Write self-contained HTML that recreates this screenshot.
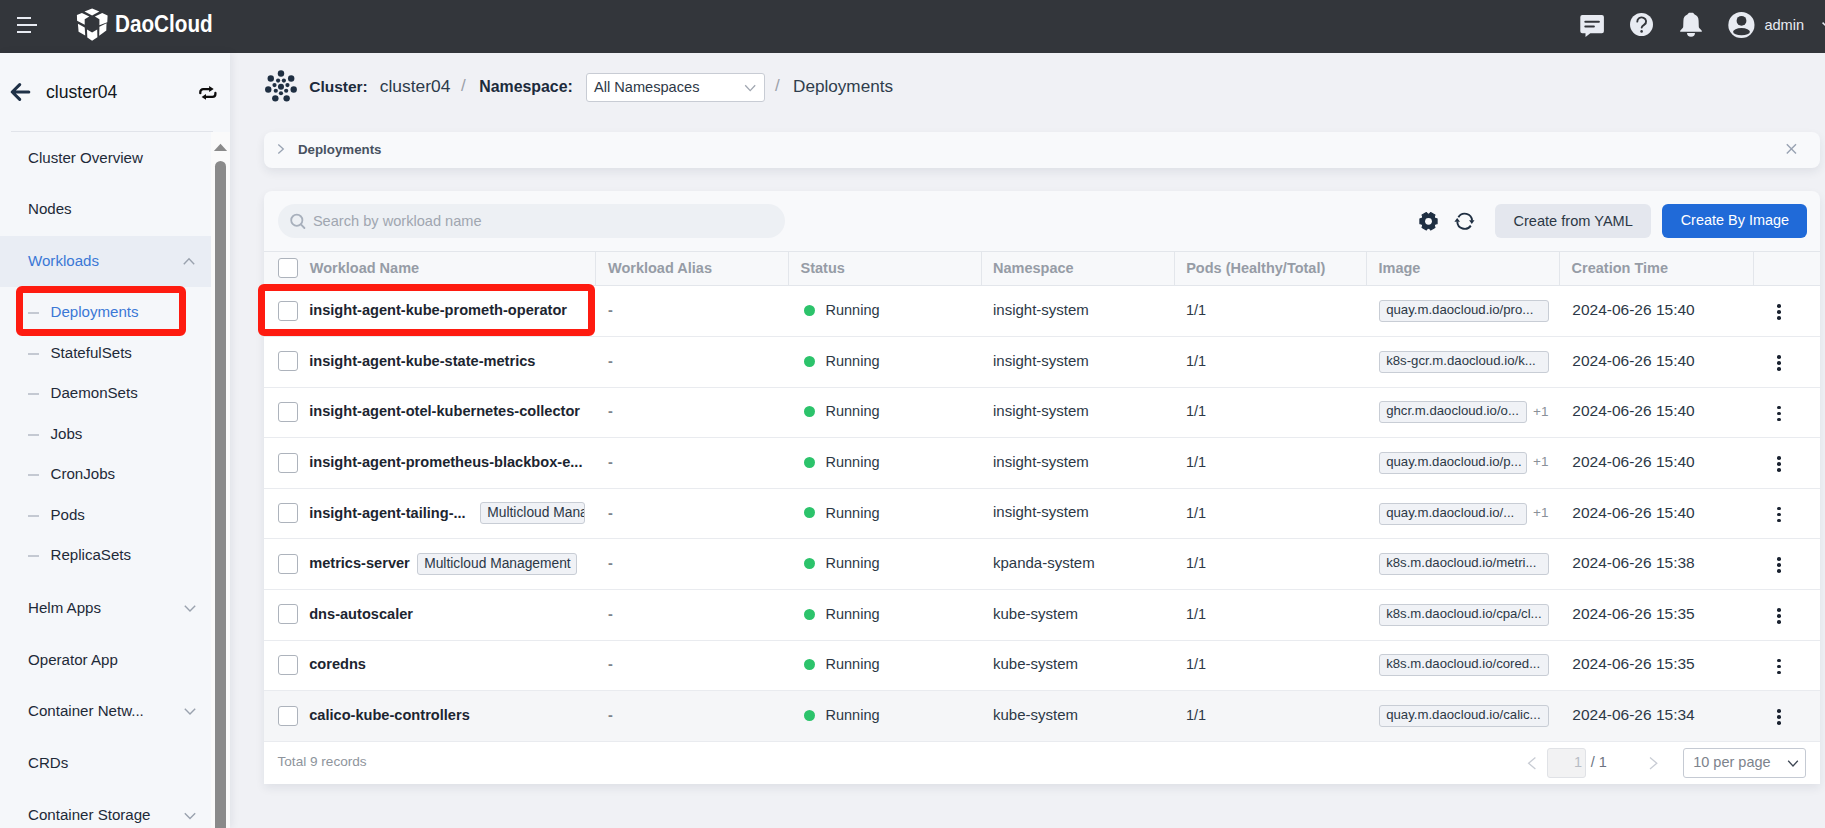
<!DOCTYPE html>
<html><head><meta charset="utf-8">
<style>
*{box-sizing:border-box;margin:0;padding:0}
html,body{width:1825px;height:828px;overflow:hidden}
body{background:#f0f1f5;font-family:"Liberation Sans",sans-serif;position:relative;color:#2c3846}
.a{position:absolute;white-space:nowrap}
.t{position:absolute;white-space:nowrap;line-height:20px;height:20px}
svg{display:block;position:absolute;overflow:visible}
#hdr{position:absolute;left:0;top:0;width:1825px;height:52.5px;background:#33363b}
#side{position:absolute;left:0;top:53px;width:230px;height:775px;background:#f5f7fa;box-shadow:2px 0 8px rgba(20,30,50,0.07)}
.nav{position:absolute;left:28px;font-size:15.1px;color:#1e2a38;line-height:20px;height:20px;white-space:nowrap}
.sub{position:absolute;left:50.5px;font-size:15.1px;color:#1e2a38;line-height:20px;height:20px;white-space:nowrap}
.dash{position:absolute;left:28px;width:11px;height:2px;background:#c4c9d2}
.card{position:absolute;background:#f8f9fb;box-shadow:0 4px 10px rgba(30,40,60,0.08)}
.hcell{position:absolute;top:-1px;height:34px;line-height:34px;font-size:14.5px;font-weight:700;color:#969ca6;white-space:nowrap}
.vsep{position:absolute;top:0;width:1px;height:34px;background:#e3e6eb}
.row{position:absolute;left:0;width:1556px;height:50.6px;background:#fff;border-bottom:1px solid #e9ebef}
.cb{position:absolute;width:20px;height:20px;border:1px solid #adb3bc;border-radius:3px;background:#fff}
.nm{position:absolute;left:45.2px;font-size:14.6px;font-weight:700;color:#1c2530;line-height:20px;white-space:nowrap}
.cell{position:absolute;font-size:14.5px;color:#2c3846;line-height:20px;white-space:nowrap}
.date{font-size:15.5px}
.dot{position:absolute;width:11px;height:11px;border-radius:50%;background:#2cc36b}
.tag{position:absolute;height:22px;border:1px solid #c8cdd5;background:#f0f2f6;border-radius:3px;font-size:13.2px;line-height:18.5px;padding-left:6px;color:#2c3846;white-space:nowrap;overflow:hidden}
.plus{position:absolute;font-size:13.5px;color:#8a9099;line-height:20px}
.more{position:absolute;width:4px;height:16px}
.more i{position:absolute;left:0;width:3.6px;height:3.6px;border-radius:50%;background:#1a2230}
</style></head><body>

<!-- HEADER -->
<div id="hdr">
  <div class="a" style="left:17px;top:16.5px;width:14px;height:2px;background:#e8ebf2"></div>
  <div class="a" style="left:17px;top:24px;width:20px;height:2px;background:#e8ebf2"></div>
  <div class="a" style="left:17px;top:31px;width:14px;height:2px;background:#e8ebf2"></div>
  <svg style="left:70px;top:4px" width="45" height="42" viewBox="70 4 45 42"><g fill="#fff">
    <path d="M84.5,11.6 L92.1,8.6 L99.4,11.6 L92.1,15.4 Z"/>
    <path d="M76.9,14.9 L81.9,12.9 L89.3,16.4 L84.7,19.2 L84.7,24.8 L77.1,20.8 Z"/>
    <path d="M94.9,16.4 L102.2,13.1 L107.6,15.4 L107.3,22.3 L99.4,25.3 L99.4,19.2 Z"/>
    <path d="M77.9,23.8 L84.7,27.4 L85.2,35.5 L78.6,31.7 Z"/>
    <path d="M87,29.4 L92.1,32.4 L97.2,29.4 L97.4,37.2 L92.1,40.8 L87.3,37.5 Z"/>
    <path d="M99.4,26.8 L106.5,23.3 L106.3,30.4 L99.2,35.7 Z"/>
  </g></svg>
  <div class="t" style="left:115px;top:12px;font-size:23.5px;line-height:24px;height:24px;font-weight:700;color:#fff;transform:scaleX(0.88);transform-origin:left center">DaoCloud</div>
  <svg style="left:0;top:0" width="1825" height="52" viewBox="0 0 1825 52">
    <path d="M1582.3,14.9 h19.6 a2,2 0 0 1 2,2 v14.4 a2,2 0 0 1 -2,2 h-11.6 l-4.8,3.8 v-3.8 h-3.2 a2,2 0 0 1 -2,-2 v-14.4 a2,2 0 0 1 2,-2 z" fill="#e8ebf2"/>
    <path d="M1585.3,21.8 h13.6 M1585.3,26.5 h8.6" stroke="#32353a" stroke-width="2" stroke-linecap="round"/>
    <circle cx="1641.5" cy="24.5" r="11.5" fill="#e8ebf2"/>
    <path d="M1637.3,21.6 a4.4,4 0 1 1 7,3 c-1.5,1 -2.6,1.8 -2.6,3" stroke="#32353a" stroke-width="1.9" fill="none" stroke-linecap="round"/>
    <circle cx="1641.6" cy="31.4" r="1.3" fill="#32353a"/>
    <path d="M1689.2,12.8 L1692.8,12.8 C1693.5,12.8 1694,14 1694.6,14.6 C1697.2,15.6 1698.6,17.8 1698.6,20.8 L1698.8,26.4 C1698.8,27.4 1699.3,28.1 1700,28.8 L1701.6,30.4 C1702.2,31 1701.9,31.8 1701,31.8 L1681,31.8 C1680.1,31.8 1679.8,31 1680.4,30.4 L1682,28.8 C1682.7,28.1 1683.2,27.4 1683.2,26.4 L1683.4,20.8 C1683.4,17.8 1684.8,15.6 1687.4,14.6 C1688,14 1688.5,12.8 1689.2,12.8 Z" fill="#e8ebf2"/>
    <path d="M1687,33.1 A4,3.7 0 0 0 1695,33.1 Z" fill="#e8ebf2"/>
    <circle cx="1741.4" cy="25" r="13.1" fill="#e8ebf2"/>
    <circle cx="1741.5" cy="20.8" r="4.9" fill="#32353a"/>
    <ellipse cx="1741.5" cy="31.7" rx="8.4" ry="3.6" fill="#32353a"/>
    <path d="M1822.6,22.6 l3.5,3.5" stroke="#e8ebf2" stroke-width="1.5" fill="none"/>
  </svg>
  <div class="t" style="left:1764.4px;top:14.8px;font-size:14.6px;color:#e8ebf2">admin</div>
</div>

<!-- SIDEBAR -->
<div id="side">
  <svg style="left:0;top:-53px" width="230" height="180" viewBox="0 0 230 180">
    <path d="M28.8,92 H12.5 M19.7,84.6 L12.2,92 L19.7,99.4" stroke="#1f3147" stroke-width="3.1" fill="none" stroke-linecap="round" stroke-linejoin="round"/>
    <path d="M200.3,93.2 v-1 a2.9,2.9 0 0 1 2.9,-3 h7" stroke="#0d0d0d" stroke-width="2.3" fill="none" stroke-linecap="round"/>
    <path d="M209.1,86.1 L213.7,89.1 L209.1,92 Z" fill="#0d0d0d"/>
    <path d="M215.4,93 v1 a2.9,2.9 0 0 1 -2.9,2.9 h-7" stroke="#0d0d0d" stroke-width="2.3" fill="none" stroke-linecap="round"/>
    <path d="M206,94 L201.6,96.9 L206,99.8 Z" fill="#0d0d0d"/>
  </svg>
  <div class="t" style="left:46px;top:29px;font-size:17.6px;color:#121820">cluster04</div>
  <div class="a" style="left:11px;top:78px;width:202px;height:1px;background:#e1e4ea"></div>
  <!-- scrollbar -->
  <div class="a" style="left:211px;top:79px;width:19px;height:696px;background:#fafafa"></div>
  <svg style="left:211px;top:79px" width="19" height="30" viewBox="211 132 19 30">
    <path d="M213.9,151.1 L220.5,143.7 L227.1,151.1 Z" fill="#8a8a8a"/>
  </svg>
  <div class="a" style="left:215px;top:108px;width:11px;height:700px;background:#8a8a8a;border-radius:5.5px"></div>

  <div class="nav" style="top:94.8px">Cluster Overview</div>
  <div class="nav" style="top:146px">Nodes</div>
  <div class="a" style="left:0;top:183px;width:211px;height:50.5px;background:#e9edf4"></div>
  <div class="nav" style="top:197.8px;color:#3b78d6">Workloads</div>
  <svg style="left:180px;top:200px" width="20" height="14" viewBox="180 253 20 14">
    <path d="M183.8,264.2 L189,258.8 L194.2,264.2" stroke="#9aa2ae" stroke-width="1.4" fill="none"/>
  </svg>
  <div class="dash" style="top:259px"></div><div class="sub" style="top:249.4px;color:#3b78d6">Deployments</div>
  <div class="dash" style="top:299.5px"></div><div class="sub" style="top:289.9px">StatefulSets</div>
  <div class="dash" style="top:340px"></div><div class="sub" style="top:330.4px">DaemonSets</div>
  <div class="dash" style="top:380.5px"></div><div class="sub" style="top:370.9px">Jobs</div>
  <div class="dash" style="top:421px"></div><div class="sub" style="top:411.4px">CronJobs</div>
  <div class="dash" style="top:461.5px"></div><div class="sub" style="top:451.9px">Pods</div>
  <div class="dash" style="top:502px"></div><div class="sub" style="top:492.4px">ReplicaSets</div>
  <div class="nav" style="top:545.4px">Helm Apps</div>
  <div class="nav" style="top:596.6px">Operator App</div>
  <div class="nav" style="top:648.3px">Container Netw...</div>
  <div class="nav" style="top:700.1px">CRDs</div>
  <div class="nav" style="top:751.8px">Container Storage</div>
  <svg style="left:180px;top:540px" width="20" height="240" viewBox="180 593 20 240">
    <path d="M184.8,605.8 L190,611 L195.2,605.8 M184.8,708.8 L190,714 L195.2,708.8 M184.8,813.3 L190,818.5 L195.2,813.3" stroke="#9aa2ae" stroke-width="1.4" fill="none"/>
  </svg>
  <!-- red box -->
  <div class="a" style="left:16px;top:233px;width:170px;height:50px;border:7px solid #fe1b10;border-radius:6px"></div>
</div>

<!-- BREADCRUMB -->
<svg style="left:260px;top:65px" width="42" height="42" viewBox="260 65 42 42" id="clicon"><g fill="#1f2f42"><circle cx="280.98" cy="73.55" r="3.2"/><circle cx="291.18" cy="78.46" r="3.2"/><circle cx="293.70" cy="89.50" r="3.2"/><circle cx="286.64" cy="98.36" r="3.2"/><circle cx="275.32" cy="98.36" r="3.2"/><circle cx="268.26" cy="89.50" r="3.2"/><circle cx="270.78" cy="78.46" r="3.2"/><circle cx="283.87" cy="80.61" r="2.1"/><circle cx="287.46" cy="85.12" r="2.1"/><circle cx="286.18" cy="90.75" r="2.1"/><circle cx="280.98" cy="93.25" r="2.1"/><circle cx="275.78" cy="90.75" r="2.1"/><circle cx="274.50" cy="85.12" r="2.1"/><circle cx="278.09" cy="80.61" r="2.1"/><circle cx="280.98" cy="86.69999999999999" r="3"/></g></svg>
<div class="t" style="left:309.2px;top:77px;font-size:15.5px;font-weight:700;color:#1c2b3c">Cluster:</div>
<div class="t" style="left:379.8px;top:76px;font-size:17.4px;color:#2c3a4a">cluster04</div>
<div class="t" style="left:461px;top:76px;font-size:17px;color:#9aa0a8">/</div>
<div class="t" style="left:479.2px;top:77px;font-size:15.9px;font-weight:700;color:#1c2b3c">Namespace:</div>
<div class="a" style="left:585.5px;top:73.2px;width:179px;height:28.4px;background:#fff;border:1px solid #c8ccd4;border-radius:3px"></div>
<div class="t" style="left:594px;top:77px;font-size:14.6px;color:#2d3846">All Namespaces</div>
<svg style="left:740px;top:80px" width="20" height="16" viewBox="740 80 20 16">
  <path d="M745.2,85.2 L750.2,90.6 L755.2,85.2" stroke="#a0a6b0" stroke-width="1.3" fill="none"/>
</svg>
<div class="t" style="left:775px;top:76px;font-size:17px;color:#9aa0a8">/</div>
<div class="t" style="left:793px;top:76px;font-size:17.15px;color:#2f3d4c">Deployments</div>

<!-- COLLAPSE CARD -->
<div class="card" style="left:264px;top:132px;width:1556px;height:36px;border-radius:8px">
  <svg style="left:10px;top:8px" width="14" height="16" viewBox="274 140 14 16">
    <path d="M278.3,144.4 L283.3,149 L278.3,153.6" stroke="#98a2b2" stroke-width="1.3" fill="none"/>
  </svg>
  <div class="t" style="left:34px;top:7.5px;font-size:13.3px;font-weight:700;color:#485261">Deployments</div>
  <svg style="left:1518px;top:8px" width="20" height="20" viewBox="1782 140 20 20">
    <path d="M1786.8,144.3 L1796,153.5 M1796,144.3 L1786.8,153.5" stroke="#98a2b2" stroke-width="1.4" fill="none"/>
  </svg>
</div>

<!-- TABLE CARD -->
<div class="card" style="left:264px;top:191px;width:1556px;height:593px;border-radius:8px 8px 0 0;overflow:hidden">
  <div class="a" style="left:14px;top:13px;width:506.5px;height:34px;border-radius:17px;background:#edf0f4"></div>
  <svg style="left:20px;top:17px" width="30" height="26" viewBox="284 208 30 26">
    <circle cx="296.8" cy="220.2" r="5.6" stroke="#a8b0bc" stroke-width="1.8" fill="none"/>
    <path d="M300.9,224.4 L304.4,228" stroke="#a8b0bc" stroke-width="1.9" stroke-linecap="round"/>
  </svg>
  <div class="t" style="left:48.9px;top:20px;font-size:14.6px;color:#a0a6b0">Search by workload name</div>
  <!-- gear -->
  <svg style="left:1150px;top:17px" width="30" height="26" viewBox="1414 208 30 26">
    <g transform="translate(1428.5 221.3)">
      <path d="M8.60,-2.50 L8.60,2.50 Q4.59,2.65 6.47,6.20 L2.13,8.70 Q0.00,5.30 -2.13,8.70 L-6.47,6.20 Q-4.59,2.65 -8.60,2.50 L-8.60,-2.50 Q-4.59,-2.65 -6.47,-6.20 L-2.13,-8.70 Q-0.00,-5.30 2.13,-8.70 L6.47,-6.20 Q4.59,-2.65 8.60,-2.50 Z" fill="#1f2f42" stroke="#1f2f42" stroke-width="1.1" stroke-linejoin="round"/>
      <circle r="3.4" fill="#f8f9fb"/>
    </g>
  </svg>
  <!-- refresh -->
  <svg style="left:1186px;top:17px" width="30" height="26" viewBox="1450 208 30 26">
    <path d="M1458.4,217.2 A7.4,7.4 0 0 1 1472.1,220.6" stroke="#1f2f42" stroke-width="1.9" fill="none"/>
    <path d="M1469.1,220.2 L1474.5,220.2 L1471.8,224 Z" fill="#1f2f42"/>
    <path d="M1470.8,225.6 A7.4,7.4 0 0 1 1457.3,221.5" stroke="#1f2f42" stroke-width="1.9" fill="none"/>
    <path d="M1454.4,221.8 L1460,221.8 L1457.2,218 Z" fill="#1f2f42"/>
  </svg>
  <div class="a" style="left:1231px;top:13px;width:156px;height:34px;border-radius:6px;background:#e4e7ee"></div>
  <div class="t" style="left:1249.4px;top:20px;font-size:14.6px;color:#2c3846">Create from YAML</div>
  <div class="a" style="left:1398px;top:13px;width:145px;height:34px;border-radius:6px;background:#206ad8"></div>
  <div class="t" style="left:1416.7px;top:19px;font-size:14.45px;color:#fff">Create By Image</div>

  <!-- header row -->
  <div class="a" style="left:0;top:60px;width:1556px;height:35.4px;border-top:1px solid #e3e6eb;border-bottom:1px solid #e3e6eb;background:#f7f8fa">
    <div class="cb" style="left:14px;top:6.2px"></div>
    <div class="hcell" style="left:45.8px">Workload Name</div>
    <div class="vsep" style="left:331px"></div><div class="hcell" style="left:344px">Workload Alias</div>
    <div class="vsep" style="left:524px"></div><div class="hcell" style="left:536.5px">Status</div>
    <div class="vsep" style="left:717.4px"></div><div class="hcell" style="left:729px">Namespace</div>
    <div class="vsep" style="left:910px"></div><div class="hcell" style="left:922.2px">Pods (Healthy/Total)</div>
    <div class="vsep" style="left:1102.2px"></div><div class="hcell" style="left:1114.5px">Image</div>
    <div class="vsep" style="left:1295.2px"></div><div class="hcell" style="left:1307.6px">Creation Time</div>
    <div class="vsep" style="left:1488.6px"></div>
  </div>
<div class="row" style="top:95.40px;background:#fff"><div class="cb" style="left:14px;top:14.4px"></div><div class="nm" style="top:13.8px">insight-agent-kube-prometh-operator</div><div class="cell" style="left:344px;top:13.8px;color:#7d838c;font-weight:700">-</div><div class="dot" style="left:540.3px;top:18.6px"></div><div class="cell" style="left:561.5px;top:13.8px">Running</div><div class="cell" style="left:729px;top:13.6px;font-size:15px">insight-system</div><div class="cell" style="left:922px;top:13.8px">1/1</div><div class="tag" style="left:1115.2px;top:13.8px;width:169.4px">quay.m.daocloud.io/pro...</div><div class="cell date" style="left:1308.3px;top:13.8px">2024-06-26 15:40</div><div class="more" style="left:1513.1px;top:18px"><i style="top:0"></i><i style="top:6px"></i><i style="top:12px"></i></div></div>
<div class="row" style="top:146.00px;background:#fff"><div class="cb" style="left:14px;top:14.4px"></div><div class="nm" style="top:13.8px">insight-agent-kube-state-metrics</div><div class="cell" style="left:344px;top:13.8px;color:#7d838c;font-weight:700">-</div><div class="dot" style="left:540.3px;top:18.6px"></div><div class="cell" style="left:561.5px;top:13.8px">Running</div><div class="cell" style="left:729px;top:13.6px;font-size:15px">insight-system</div><div class="cell" style="left:922px;top:13.8px">1/1</div><div class="tag" style="left:1115.2px;top:13.8px;width:169.4px">k8s-gcr.m.daocloud.io/k...</div><div class="cell date" style="left:1308.3px;top:13.8px">2024-06-26 15:40</div><div class="more" style="left:1513.1px;top:18px"><i style="top:0"></i><i style="top:6px"></i><i style="top:12px"></i></div></div>
<div class="row" style="top:196.60px;background:#fff"><div class="cb" style="left:14px;top:14.4px"></div><div class="nm" style="top:13.8px">insight-agent-otel-kubernetes-collector</div><div class="cell" style="left:344px;top:13.8px;color:#7d838c;font-weight:700">-</div><div class="dot" style="left:540.3px;top:18.6px"></div><div class="cell" style="left:561.5px;top:13.8px">Running</div><div class="cell" style="left:729px;top:13.6px;font-size:15px">insight-system</div><div class="cell" style="left:922px;top:13.8px">1/1</div><div class="tag" style="left:1115.2px;top:13.8px;width:148.2px">ghcr.m.daocloud.io/o...</div><div class="plus" style="left:1269px;top:14px">+1</div><div class="cell date" style="left:1308.3px;top:13.8px">2024-06-26 15:40</div><div class="more" style="left:1513.1px;top:18px"><i style="top:0"></i><i style="top:6px"></i><i style="top:12px"></i></div></div>
<div class="row" style="top:247.20px;background:#fff"><div class="cb" style="left:14px;top:14.4px"></div><div class="nm" style="top:13.8px">insight-agent-prometheus-blackbox-e...</div><div class="cell" style="left:344px;top:13.8px;color:#7d838c;font-weight:700">-</div><div class="dot" style="left:540.3px;top:18.6px"></div><div class="cell" style="left:561.5px;top:13.8px">Running</div><div class="cell" style="left:729px;top:13.6px;font-size:15px">insight-system</div><div class="cell" style="left:922px;top:13.8px">1/1</div><div class="tag" style="left:1115.2px;top:13.8px;width:148.2px">quay.m.daocloud.io/p...</div><div class="plus" style="left:1269px;top:14px">+1</div><div class="cell date" style="left:1308.3px;top:13.8px">2024-06-26 15:40</div><div class="more" style="left:1513.1px;top:18px"><i style="top:0"></i><i style="top:6px"></i><i style="top:12px"></i></div></div>
<div class="row" style="top:297.80px;background:#fff"><div class="cb" style="left:14px;top:14.4px"></div><div class="nm" style="top:13.8px">insight-agent-tailing-...</div><div class="tag" style="left:216.3px;top:13.5px;width:104.4px;font-size:13.8px;line-height:20px">Multicloud Management</div><div class="cell" style="left:344px;top:13.8px;color:#7d838c;font-weight:700">-</div><div class="dot" style="left:540.3px;top:18.6px"></div><div class="cell" style="left:561.5px;top:13.8px">Running</div><div class="cell" style="left:729px;top:13.6px;font-size:15px">insight-system</div><div class="cell" style="left:922px;top:13.8px">1/1</div><div class="tag" style="left:1115.2px;top:13.8px;width:148.2px">quay.m.daocloud.io/...</div><div class="plus" style="left:1269px;top:14px">+1</div><div class="cell date" style="left:1308.3px;top:13.8px">2024-06-26 15:40</div><div class="more" style="left:1513.1px;top:18px"><i style="top:0"></i><i style="top:6px"></i><i style="top:12px"></i></div></div>
<div class="row" style="top:348.40px;background:#fff"><div class="cb" style="left:14px;top:14.4px"></div><div class="nm" style="top:13.8px">metrics-server</div><div class="tag" style="left:153.2px;top:13.9px;width:159.5px;font-size:13.8px;line-height:20px">Multicloud Management</div><div class="cell" style="left:344px;top:13.8px;color:#7d838c;font-weight:700">-</div><div class="dot" style="left:540.3px;top:18.6px"></div><div class="cell" style="left:561.5px;top:13.8px">Running</div><div class="cell" style="left:729px;top:13.6px;font-size:15px">kpanda-system</div><div class="cell" style="left:922px;top:13.8px">1/1</div><div class="tag" style="left:1115.2px;top:13.8px;width:169.4px">k8s.m.daocloud.io/metri...</div><div class="cell date" style="left:1308.3px;top:13.8px">2024-06-26 15:38</div><div class="more" style="left:1513.1px;top:18px"><i style="top:0"></i><i style="top:6px"></i><i style="top:12px"></i></div></div>
<div class="row" style="top:399.00px;background:#fff"><div class="cb" style="left:14px;top:14.4px"></div><div class="nm" style="top:13.8px">dns-autoscaler</div><div class="cell" style="left:344px;top:13.8px;color:#7d838c;font-weight:700">-</div><div class="dot" style="left:540.3px;top:18.6px"></div><div class="cell" style="left:561.5px;top:13.8px">Running</div><div class="cell" style="left:729px;top:13.6px;font-size:15px">kube-system</div><div class="cell" style="left:922px;top:13.8px">1/1</div><div class="tag" style="left:1115.2px;top:13.8px;width:169.4px">k8s.m.daocloud.io/cpa/cl...</div><div class="cell date" style="left:1308.3px;top:13.8px">2024-06-26 15:35</div><div class="more" style="left:1513.1px;top:18px"><i style="top:0"></i><i style="top:6px"></i><i style="top:12px"></i></div></div>
<div class="row" style="top:449.60px;background:#fff"><div class="cb" style="left:14px;top:14.4px"></div><div class="nm" style="top:13.8px">coredns</div><div class="cell" style="left:344px;top:13.8px;color:#7d838c;font-weight:700">-</div><div class="dot" style="left:540.3px;top:18.6px"></div><div class="cell" style="left:561.5px;top:13.8px">Running</div><div class="cell" style="left:729px;top:13.6px;font-size:15px">kube-system</div><div class="cell" style="left:922px;top:13.8px">1/1</div><div class="tag" style="left:1115.2px;top:13.8px;width:169.4px">k8s.m.daocloud.io/cored...</div><div class="cell date" style="left:1308.3px;top:13.8px">2024-06-26 15:35</div><div class="more" style="left:1513.1px;top:18px"><i style="top:0"></i><i style="top:6px"></i><i style="top:12px"></i></div></div>
<div class="row" style="top:500.20px;background:#f5f6f8"><div class="cb" style="left:14px;top:14.4px"></div><div class="nm" style="top:13.8px">calico-kube-controllers</div><div class="cell" style="left:344px;top:13.8px;color:#7d838c;font-weight:700">-</div><div class="dot" style="left:540.3px;top:18.6px"></div><div class="cell" style="left:561.5px;top:13.8px">Running</div><div class="cell" style="left:729px;top:13.6px;font-size:15px">kube-system</div><div class="cell" style="left:922px;top:13.8px">1/1</div><div class="tag" style="left:1115.2px;top:13.8px;width:169.4px">quay.m.daocloud.io/calic...</div><div class="cell date" style="left:1308.3px;top:13.8px">2024-06-26 15:34</div><div class="more" style="left:1513.1px;top:18px"><i style="top:0"></i><i style="top:6px"></i><i style="top:12px"></i></div></div>
  <!-- footer -->
  <div class="a" style="left:0;top:550.8px;width:1556px;height:43px;background:#fff">
    <div class="t" style="left:13.5px;top:10.3px;font-size:13.6px;color:#8e949c">Total 9 records</div>
    <svg style="left:1258px;top:8px" width="20" height="20" viewBox="1522 749 20 20">
      <path d="M1535.4,756.4 L1528.6,762.2 L1535.4,768" stroke="#c8ccd4" stroke-width="1.3" fill="none"/>
    </svg>
    <div class="a" style="left:1283.2px;top:6.6px;width:38.6px;height:29.3px;background:#f2f2f3;border:1px solid #e0e2e6;border-radius:3px"></div>
    <div class="t" style="left:1310px;top:10.5px;font-size:14.5px;color:#b8bcc4">1</div>
    <div class="t" style="left:1326.8px;top:10.5px;font-size:14.5px;color:#6b7280">/ 1</div>
    <svg style="left:1380px;top:8px" width="20" height="20" viewBox="1644 749 20 20">
      <path d="M1650,756.4 L1656.8,762.2 L1650,768" stroke="#c8ccd4" stroke-width="1.3" fill="none"/>
    </svg>
    <div class="a" style="left:1419.4px;top:6.6px;width:123px;height:29.3px;background:#fff;border:1px solid #c5cad3;border-radius:3px"></div>
    <div class="t" style="left:1429.2px;top:10.5px;font-size:14.5px;color:#7d838c">10 per page</div>
    <svg style="left:1520px;top:8px" width="20" height="20" viewBox="1784 749 20 20">
      <path d="M1788.2,759.8 L1793,765 L1797.8,759.8" stroke="#3d4653" stroke-width="1.3" fill="none"/>
    </svg>
  </div>
</div>

<!-- RED BOX on table -->
<div class="a" style="left:258px;top:284.2px;width:337px;height:51.6px;border:7px solid #fe1b10;border-radius:6px"></div>

</body></html>
